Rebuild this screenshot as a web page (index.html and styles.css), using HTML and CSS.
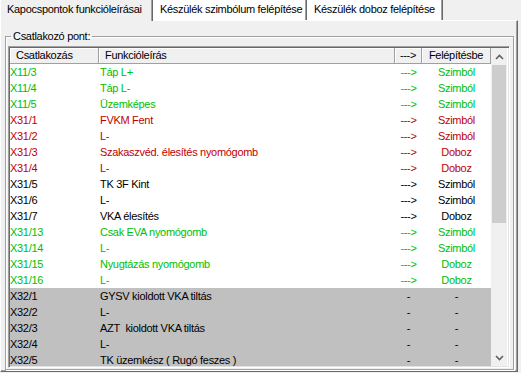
FILE: index.html
```html
<!DOCTYPE html>
<html>
<head>
<meta charset="utf-8">
<title>Kapocspontok</title>
<link rel="stylesheet" href="styles.css">
</head>
<body>
  <div class="tabs">
    <div class="tab active">Kapocspontok funkcióleírásai</div>
    <div class="tab t2">Készülék szimbólum felépítése</div>
    <div class="tab t3">Készülék doboz felépítése</div>
  </div>

  <div class="panel">
    <fieldset class="group">
      <legend>Csatlakozó pont:</legend>
      <div class="list">
        <div class="grid">
          <div class="row head">
            <div>Csatlakozás</div>
            <div>Funkcióleírás</div>
            <div class="c">---&gt;</div>
            <div class="c">Felépítésbe</div>
          </div>
          <div class="row ok"><div>X11/3</div><div>Táp L+</div><div class="c">---&gt;</div><div class="c">Szimból</div></div>
          <div class="row ok"><div>X11/4</div><div>Táp L-</div><div class="c">---&gt;</div><div class="c">Szimból</div></div>
          <div class="row ok"><div>X11/5</div><div>Üzemképes</div><div class="c">---&gt;</div><div class="c">Szimból</div></div>
          <div class="row err"><div>X31/1</div><div>FVKM Fent</div><div class="c">---&gt;</div><div class="c">Szimból</div></div>
          <div class="row err"><div>X31/2</div><div>L-</div><div class="c">---&gt;</div><div class="c">Szimból</div></div>
          <div class="row err"><div>X31/3</div><div>Szakaszvéd. élesítés nyomógomb</div><div class="c">---&gt;</div><div class="c">Doboz</div></div>
          <div class="row err"><div>X31/4</div><div>L-</div><div class="c">---&gt;</div><div class="c">Doboz</div></div>
          <div class="row"><div>X31/5</div><div>TK 3F Kint</div><div class="c">---&gt;</div><div class="c">Szimból</div></div>
          <div class="row"><div>X31/6</div><div>L-</div><div class="c">---&gt;</div><div class="c">Szimból</div></div>
          <div class="row"><div>X31/7</div><div>VKA élesítés</div><div class="c">---&gt;</div><div class="c">Doboz</div></div>
          <div class="row ok"><div>X31/13</div><div>Csak EVA nyomógomb</div><div class="c">---&gt;</div><div class="c">Szimból</div></div>
          <div class="row ok"><div>X31/14</div><div>L-</div><div class="c">---&gt;</div><div class="c">Szimból</div></div>
          <div class="row ok"><div>X31/15</div><div>Nyugtázás nyomógomb</div><div class="c">---&gt;</div><div class="c">Doboz</div></div>
          <div class="row ok"><div>X31/16</div><div>L-</div><div class="c">---&gt;</div><div class="c">Doboz</div></div>
          <div class="row off"><div>X32/1</div><div>GYSV kioldott VKA tiltás</div><div class="c">-</div><div class="c">-</div></div>
          <div class="row off"><div>X32/2</div><div>L-</div><div class="c">-</div><div class="c">-</div></div>
          <div class="row off"><div>X32/3</div><div>AZT&nbsp; kioldott VKA tiltás</div><div class="c">-</div><div class="c">-</div></div>
          <div class="row off"><div>X32/4</div><div>L-</div><div class="c">-</div><div class="c">-</div></div>
          <div class="row off"><div>X32/5</div><div>TK üzemkész ( Rugó feszes )</div><div class="c">-</div><div class="c">-</div></div>
        </div>
        <div class="vscroll">
          <div class="arrow">
            <svg width="9" height="6" viewBox="0 0 9 6"><polyline points="1,5 4.5,1.5 8,5" fill="none" stroke="#606060" stroke-width="1.6"/></svg>
          </div>
          <div class="thumb"></div>
          <div class="track"></div>
          <div class="arrow">
            <svg width="9" height="6" viewBox="0 0 9 6"><polyline points="1,1 4.5,4.5 8,1" fill="none" stroke="#606060" stroke-width="1.6"/></svg>
          </div>
        </div>
      </div>
    </fieldset>
  </div>
</body>
</html>
```

FILE: styles.css
```css
html, body { margin:0; background:#f0f0f0; }
body
{
  width:521px; height:373px; overflow:hidden;
  font-family:"Liberation Sans", Arial, sans-serif;
  font-size:11px; letter-spacing:-0.3px; color:#000;
}

/* tab strip */
.tabs { display:flex; height:20px; }
.tab
{
  box-sizing:border-box; height:20px;
  padding-left:6px; line-height:19px; white-space:nowrap;
  background:#fff;
  border-left:1px solid #fff;
  border-right:1px solid #696969;
  box-shadow:inset -1px 0 0 #a0a0a0;
}
.tab.active
{
  width:153px; padding-left:6px;
  background:#f0f0f0;
  position:relative; z-index:1; height:21px; margin-bottom:-1px;
}
.tab.t2 { width:154px; }
.tab.t3 { width:136px; }

/* page panel */
.panel
{
  box-sizing:border-box; width:518px; height:352px;
  padding:9px 3px 0 4px;
  border:1px solid; border-color:#fff #696969 #696969 #fff;
  box-shadow:inset -1px -1px 0 #a0a0a0;
}

/* group box */
.group
{
  margin:0; min-width:0;
  padding:4px 3px 1px 2px;
  border:1px solid #a0a0a0;
  box-shadow:1px 1px 0 #fff, inset 1px 1px 0 #fff;
}
.group legend
{
  margin-left:3px; padding:0 2px;
  line-height:12px;
}

/* list view */
.list
{
  display:flex; height:322px; box-sizing:border-box;
  border:1px solid; border-color:#a0a0a0 #fff #fff #a0a0a0;
  box-shadow:inset 1px 1px 0 #696969, inset -1px -1px 0 #e3e3e3;
  padding:1px;
  background:#fff; overflow:hidden;
}
.grid { width:481px; overflow:hidden; }
.row
{
  display:grid; grid-template-columns:89px 296px 27px 69px;
  height:16px; line-height:16px; white-space:nowrap;
}
.row > div { overflow:hidden; padding-left:1px; }
.row > div:first-child { padding-left:0; }
.row > .c { padding-left:0; text-align:center; }

.row.head { background:#f0f0f0; line-height:15px; }
.row.head > div
{
  border-right:1px solid #a0a0a0; border-bottom:1px solid #a0a0a0;
  box-shadow:inset 1px 1px 0 #fff;
  padding-left:6px;
}
.row.head > .c { padding-left:0; }

.row.ok { color:#00c000; }
.row.err { color:#c00000; }
.row.off { background:#c0c0c0; }

/* scrollbar */
.vscroll { width:16px; display:flex; flex-direction:column; background:#f0f0f0; }
.arrow { height:17px; display:flex; align-items:center; justify-content:center; }
.thumb { height:158px; margin:0 1px; background:#cdcdcd; }
.track { flex:1; }
```
